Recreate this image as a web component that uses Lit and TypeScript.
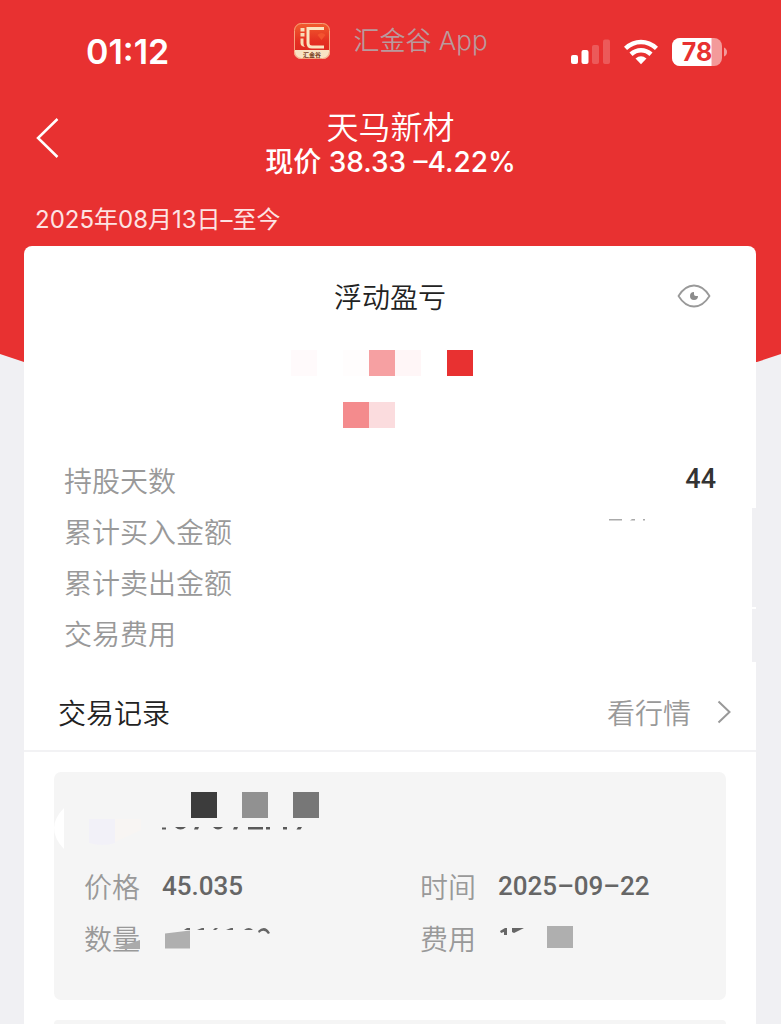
import { LitElement, html, css } from "lit";
import { customElement, property, state } from "lit/decorators.js";
import { styleMap } from "lit/directives/style-map.js";

type Tile = { color: string };

@customElement("mosaic-row")
class MosaicRow extends LitElement {
  static styles = css`
    :host { display: flex; }
    .tile { width: 26px; height: 26px; }
  `;
  @property({ attribute: false }) tiles: Tile[] = [];
  render() {
    return this.tiles.map(
      (t) => html`<span class="tile" style=${styleMap({ background: t.color })}></span>`
    );
  }
}

@customElement("status-bar")
class StatusBar extends LitElement {
  static styles = css`
    :host {
      display: grid;
      grid-template-columns: 1fr auto 1fr;
      padding: 0 54px;
      height: 84px;
      box-sizing: border-box;
      color: #fff;
      font-family: Inter, sans-serif;
    }
    .time { font-size: 34px; font-weight: 600; line-height: 40px; padding: 32px 0 0 32px; }
    .app { display: flex; align-items: center; gap: 22px; height: 40px; padding-top: 21px; }
    .name { font: 400 26px/40px Inter, "Noto Sans CJK SC", sans-serif; font-weight: 350; color: #b99a9d; white-space: nowrap; }
    .icons { display: flex; justify-content: flex-end; align-items: center; gap: 14px; height: 40px; padding-top: 32px; }
    svg { display: block; }
    .level { font: 700 25px Inter, sans-serif; fill: #e83131; }
    .seal { font: 700 6px "Noto Sans CJK SC", sans-serif; fill: #7a3d22; }
  `;
  render() {
    return html`
      <span class="time">01:12</span>
      <div class="app">
        <svg width="38" height="38" viewBox="0 0 38 38" aria-hidden="true">
          <defs>
            <linearGradient id="g" x1="0" y1="0" x2="0" y2="1">
              <stop offset="0" stop-color="#f2602f" />
              <stop offset="0.5" stop-color="#e52f22" />
              <stop offset="1" stop-color="#d92420" />
            </linearGradient>
            <clipPath id="c"><rect x="1" y="1" width="36" height="36" rx="7" /></clipPath>
          </defs>
          <g clip-path="url(#c)">
            <rect width="38" height="38" fill="url(#g)" />
            <rect y="28" width="38" height="10" fill="#f8e3c4" />
          </g>
          <rect x="1.5" y="1.5" width="35" height="35" rx="7" fill="none" stroke="#f7a07c" />
          <path d="M7.5 6h4v3.500h-4zM7.500 11h4v3.500h-4zM7.500 16.500h3v5q0 2 1.500 3.500-4.500-.5-4.500-4z" fill="#f8dcb8" />
          <path d="M31 6.500H15V21q0 4 4 4h12" fill="none" stroke="#fbe3c0" stroke-width="3" />
          <path d="M24.500 13q4-4 8 0l-4 5z" fill="#f3532f" />
          <text class="seal" x="19" y="34.500" text-anchor="middle">汇金谷</text>
        </svg>
        <span class="name">汇金谷 App</span>
      </div>
      <div class="icons">
        <svg width="40" height="26" viewBox="0 0 40 26" fill="#fff" aria-label="信号">
          <rect x="1" y="16" width="7" height="9" rx="2" />
          <rect x="11.500" y="11" width="7" height="14" rx="2" />
          <g opacity="0.2">
            <rect x="22" y="6" width="7" height="19" rx="2" />
            <rect x="33" y="0.500" width="7" height="24.500" rx="2" />
          </g>
        </svg>
        <svg width="34" height="26" viewBox="0 0 34 26" aria-label="无线网络">
          <g fill="none" stroke="#fff" stroke-width="4.600">
            <path d="M1.500 9.400Q8.500 3 17 3t15.500 6.400" />
            <path d="M7 15.200q4.500-4 10-4t10 4" />
          </g>
          <path d="M11.500 19.500q5.500-4.500 11 0L17 25.200z" fill="#fff" />
        </svg>
        <svg width="55" height="28" viewBox="0 0 55 28" aria-label="电量 78%">
          <rect width="50" height="28" rx="8" fill="#f39a9a" />
          <path d="M8 0h31.500v28H8a8 8 0 0 1-8-8V8a8 8 0 0 1 8-8z" fill="#fff" />
          <path d="M52 9.500q3 1.500 3 4.500t-3 4.500z" fill="#f39a9a" />
          <text class="level" x="25" y="23" text-anchor="middle">78</text>
        </svg>
      </div>
    `;
  }
}

@customElement("trade-card")
class TradeCard extends LitElement {
  static styles = css`
    :host { display: block; background: #f5f5f5; border-radius: 7px; }
    .masked { display: block; width: 100%; height: 88px; }
    .fields {
      margin: 0;
      padding-bottom: 36px;
      display: grid;
      grid-template-columns: 1fr 1fr;
      font: 400 28px/52px "Noto Sans CJK SC", sans-serif;
      color: #999;
    }
    .field { display: flex; align-items: center; gap: 22px; height: 52px; padding-left: 30px; }
    dt { font-weight: 350; }
    dd { margin: 0; display: flex; align-items: center; font: 500 26px/52px Roboto, sans-serif; color: #666; }
    svg { display: block; overflow: visible; }
  `;
  render() {
    return html`
      <svg class="masked" aria-hidden="true">
        <path d="M10 36Q-10 56 10 77z" fill="#fff" />
        <path d="M35 47h26v24q-12 4-26 0z" fill="#f2f1f8" />
        <path d="M61 47h26v11l-26 12z" fill="#f8f5f3" />
        <rect x="137" y="20" width="26" height="26" fill="#3c3c3c" />
        <rect x="188" y="20" width="26" height="26" fill="#919191" />
        <rect x="239" y="20" width="26" height="26" fill="#777" />
        <path
          fill="#5a5a5a"
          d="M108 55.500h4v2h-4zM121 55h11q-5.500 5-11 0zM141 55h4l-1 2.500h-4zM159 55h10q-5 5-10 0zM180 55h4l-1 2.500h-4zM194 55h15v2.500h-15zM212 55h4v2.500h-4zM229 55h4v2.500h-4zM244 55h4l-1.500 2.500h-4z"
        />
      </svg>
      <dl class="fields">
        <div class="field"><dt>价格</dt><dd>45.035</dd></div>
        <div class="field"><dt>时间</dt><dd>2025–09–22</dd></div>
        <div class="field">
          <dt>数量</dt>
          <dd>
            <svg width="110" height="26" viewBox="0 0 110 26" aria-hidden="true">
              <path d="M-43 22l21-7v9h-21z" fill="#aaa" />
              <path d="M3 8.500l25-3v18H3z" fill="#afafaf" />
              <path d="M22 5l3-2h3v2zM35 5l5-2h2v2zM51 5l2-2h3l-2 2zM64 5l5-2h2v2zM82 5q5-4 9 0zM96 6q7-7 12 2l-2 1q-4-6-9-1z" fill="#666" />
            </svg>
          </dd>
        </div>
        <div class="field">
          <dt>费用</dt>
          <dd>
            <svg width="80" height="26" viewBox="0 0 80 26" aria-hidden="true">
              <path d="M2 6l5-3h2v7H6V7L3 8zM14 3h12l-10 5-2-1z" fill="#666" />
              <rect x="49" y="1" width="26" height="22" fill="#afafaf" />
            </svg>
          </dd>
        </div>
      </dl>
    `;
  }
}

@customElement("app-root")
class AppRoot extends LitElement {
  static styles = css`
    :host {
      display: grid;
      grid-template: 1fr / 1fr;
      min-height: 100vh;
      background: #f0f0f3;
      font-family: "Noto Sans CJK SC", sans-serif;
    }
    .backdrop {
      grid-area: 1 / 1;
      height: 362px;
      background: #e83131;
      clip-path: polygon(0 0, 100% 0, 100% 354px, calc(100% - 24px) 100%, 24px 100%, 0 354px);
    }
    .page { grid-area: 1 / 1; display: flex; flex-direction: column; min-width: 0; z-index: 1; }
    button { border: 0; padding: 0; margin: 0; background: none; cursor: pointer; display: block; }
    svg { display: block; }
    .nav { display: grid; grid-template-columns: 1fr auto 1fr; align-items: start; padding: 22px 36px 0; height: 74px; color: #fff; }
    .back { padding-top: 11px; }
    .heading { text-align: center; }
    h1 { margin: 0; font-size: 32px; line-height: 38px; font-weight: 350; }
    .price { margin: 0; font: 500 28px/36px Inter, "Noto Sans CJK SC", sans-serif; }
    .period { margin: 0; padding: 22px 35px 8px; font: 400 24px/36px Inter, "Noto Sans CJK SC", sans-serif; color: #fde3e3; }
    .card { position: relative; flex: 1; display: flex; flex-direction: column; margin: 0 25px 0 24px; background: #fff; border-radius: 8px 8px 0 0; }
    .title { display: grid; grid-template-columns: 1fr auto 1fr; align-items: center; padding: 29px 45px 0; height: 42px; }
    .title button { grid-column: 3; justify-self: end; }
    h2 { margin: 0; font-size: 28px; line-height: 42px; font-weight: 350; color: #222; }
    .title h2 { grid-column: 2; }
    .profit { display: grid; gap: 26px; padding: 33px 16px 26px 0; justify-content: center; }
    .stats { margin: 0; padding: 0 40px; font-size: 28px; }
    .stat { display: flex; justify-content: space-between; align-items: center; height: 51px; }
    dt { font-weight: 350; color: #999; }
    dd { margin: 0; font: 500 27px/51px Roboto, sans-serif; color: #333; }
    .trace { margin-right: 68px; padding-bottom: 22px; }
    .records { display: flex; justify-content: space-between; align-items: center; padding: 15px 25px 0 34px; height: 77px; border-bottom: 2px solid #f2f2f4; }
    .quote { display: flex; align-items: center; gap: 26px; font-size: 28px; font-weight: 350; color: #999; text-decoration: none; }
    .list { flex: 1; display: flex; flex-direction: column; gap: 20px; padding: 20px 30px 0; }
    .next { flex: 1; background: #f5f5f5; border-radius: 7px 7px 0 0; }
    .notch { position: absolute; right: 0; top: 262px; }
  `;

  @state() private concealed = true;

  private profit: Tile[][] = [
    ["#fffafb", "#fff", "#fffdfd", "#f6a0a2", "#fff6f7", "#fff", "#e83131"],
    ["#fff", "#fff", "#f48b8d", "#fbdcde"],
  ].map((row) => row.map((color) => ({ color })));

  render() {
    return html`
      <div class="backdrop"></div>
      <div class="page">
        <status-bar></status-bar>
        <header class="nav">
          <button class="back" aria-label="返回">
            <svg width="24" height="42" viewBox="0 0 24 42" fill="none" stroke="#fff" stroke-width="2.500">
              <path d="M21.500 2L2 21l19.500 19" />
            </svg>
          </button>
          <div class="heading">
            <h1>天马新材</h1>
            <p class="price">现价 38.33 –4.22%</p>
          </div>
        </header>
        <p class="period">2025年08月13日–至今</p>
        <main class="card">
          <div class="title">
            <h2>浮动盈亏</h2>
            <button aria-label="显示金额" aria-pressed=${this.concealed} @click=${() => (this.concealed = !this.concealed)}>
              <svg width="34" height="24" viewBox="0 0 34 24">
                <path d="M1.500 12Q8 1.500 17 1.500T32.500 12Q26 22.500 17 22.500T1.500 12z" fill="none" stroke="#999" stroke-width="1.800" stroke-linejoin="round" />
                <path d="M17 8a4 4 0 1 0 4 4h-2.200q-1.800 0-1.800-1.800z" fill="#8c8c8c" />
              </svg>
            </button>
          </div>
          <div class="profit">
            ${this.profit.map((tiles) => html`<mosaic-row .tiles=${tiles}></mosaic-row>`)}
          </div>
          <dl class="stats">
            <div class="stat"><dt>持股天数</dt><dd>44</dd></div>
            <div class="stat">
              <dt>累计买入金额</dt>
              <dd class="trace">
                <svg width="40" height="3" viewBox="0 0 40 3" fill="#aaa" aria-hidden="true">
                  <path d="M1 1h13v1.500H1zM22 2.500l2-1.500h3v1.500zM35 1h2v1.500h-2z" />
                </svg>
              </dd>
            </div>
            <div class="stat"><dt>累计卖出金额</dt></div>
            <div class="stat"><dt>交易费用</dt></div>
          </dl>
          <div class="records">
            <h2>交易记录</h2>
            <a class="quote" href="#quote">看行情
              <svg width="14" height="24" viewBox="0 0 14 24" fill="none" stroke="#999" stroke-width="2">
                <path d="M1.500 1.500L12.500 12l-11 10.500" />
              </svg>
            </a>
          </div>
          <div class="list">
            <trade-card></trade-card>
            <div class="next"></div>
          </div>
          <svg class="notch" width="4" height="154" viewBox="0 0 4 154" fill="#f0f0f3" aria-hidden="true">
            <path d="M0 0h4v99H0zM0 101h4v53H0z" />
          </svg>
        </main>
      </div>
    `;
  }
}
